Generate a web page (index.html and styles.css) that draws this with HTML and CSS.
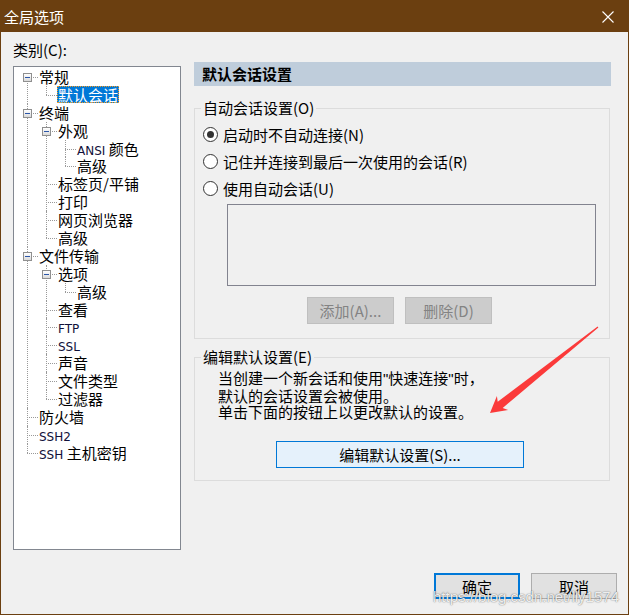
FILE: index.html
```html
<!DOCTYPE html>
<html lang="zh-CN">
<head>
  <meta charset="UTF-8">
  <title>全局选项</title>
  <link rel="stylesheet" href="styles.css">
</head>
<body>
  <div class="window">
    <div class="titlebar">
      <span class="title">全局选项</span>
      <svg class="close" width="12" height="12" viewBox="0 0 12 12">
        <path d="M0.5 0.5 L11.5 11.5 M11.5 0.5 L0.5 11.5" stroke="#fff" stroke-width="1.1" fill="none"/>
      </svg>
    </div>

    <div class="main">
      <div class="left">
        <div class="cat-label">类别(C):</div>
        <div class="tree-box">
          <ul class="tree">
            <li><div class="row"><span class="slot"><span class="toggle"></span></span><span class="label">常规</span></div>
              <ul>
                <li><div class="row"><span class="slot"></span><span class="label selected">默认会话</span></div></li>
              </ul>
            </li>
            <li><div class="row"><span class="slot"><span class="toggle"></span></span><span class="label">终端</span></div>
              <ul>
                <li><div class="row"><span class="slot"><span class="toggle"></span></span><span class="label">外观</span></div>
                  <ul>
                    <li><div class="row"><span class="slot"></span><span class="label"><span class="lat">ANSI</span> 颜色</span></div></li>
                    <li><div class="row"><span class="slot"></span><span class="label">高级</span></div></li>
                  </ul>
                </li>
                <li><div class="row"><span class="slot"></span><span class="label">标签页/平铺</span></div></li>
                <li><div class="row"><span class="slot"></span><span class="label">打印</span></div></li>
                <li><div class="row"><span class="slot"></span><span class="label">网页浏览器</span></div></li>
                <li><div class="row"><span class="slot"></span><span class="label">高级</span></div></li>
              </ul>
            </li>
            <li><div class="row"><span class="slot"><span class="toggle"></span></span><span class="label">文件传输</span></div>
              <ul>
                <li><div class="row"><span class="slot"><span class="toggle"></span></span><span class="label">选项</span></div>
                  <ul>
                    <li><div class="row"><span class="slot"></span><span class="label">高级</span></div></li>
                  </ul>
                </li>
                <li><div class="row"><span class="slot"></span><span class="label">查看</span></div></li>
                <li><div class="row"><span class="slot"></span><span class="label"><span class="lat">FTP</span></span></div></li>
                <li><div class="row"><span class="slot"></span><span class="label"><span class="lat">SSL</span></span></div></li>
                <li><div class="row"><span class="slot"></span><span class="label">声音</span></div></li>
                <li><div class="row"><span class="slot"></span><span class="label">文件类型</span></div></li>
                <li><div class="row"><span class="slot"></span><span class="label">过滤器</span></div></li>
              </ul>
            </li>
            <li><div class="row"><span class="slot"></span><span class="label">防火墙</span></div></li>
            <li><div class="row"><span class="slot"></span><span class="label"><span class="lat">SSH2</span></span></div></li>
            <li><div class="row"><span class="slot"></span><span class="label"><span class="lat">SSH</span> 主机密钥</span></div></li>
          </ul>
        </div>
      </div>

      <div class="right">
        <div class="page-header">默认会话设置</div>

        <fieldset class="group auto-group">
          <legend>自动会话设置(O)</legend>
          <label class="radio-row"><input type="radio" name="auto" checked>启动时不自动连接(N)</label>
          <label class="radio-row"><input type="radio" name="auto">记住并连接到最后一次使用的会话(R)</label>
          <label class="radio-row"><input type="radio" name="auto">使用自动会话(U)</label>
          <div class="session-list"></div>
          <div class="list-buttons">
            <button class="btn disabled">添加(A)...</button>
            <button class="btn disabled">删除(D)</button>
          </div>
        </fieldset>

        <fieldset class="group edit-group">
          <legend>编辑默认设置(E)</legend>
          <p class="desc">当创建一个新会话和使用<span class="q">"</span>快速连接<span class="q">"</span>时，<br>默认的会话设置会被使用。<br>单击下面的按钮上以更改默认的设置。</p>
          <button class="btn edit-btn">编辑默认设置(S)...</button>
        </fieldset>
      </div>
    </div>

    <div class="footer">
      <button class="btn dlg-btn default">确定</button>
      <button class="btn dlg-btn">取消</button>
    </div>

    <svg class="arrow" width="629" height="615" viewBox="0 0 629 615">
      <polygon points="490,413 508.1,410 502.7,408 598.4,327.6 597.6,326.4 497.7,401.8 496.9,396" fill="#fb3a3a"/>
    </svg>
    <div class="watermark">https://blog.csdn.net/lly1574</div>
  </div>
</body>
</html>
```

FILE: styles.css
```css
* {
  box-sizing: border-box;
}
body {
  margin: 0;
  font-family: "Noto Sans CJK SC", "Liberation Sans", sans-serif;
  font-size: 15px;
  color: #000;
  background: #f0f0f0;
}
.window {
  position: relative;
  width: 629px;
  height: 615px;
  border: 1px solid #6b3f10;
  background: #f0f0f0;
}
.titlebar {
  height: 31px;
  background: #6b3f10;
  color: #fff;
  display: flex;
  align-items: center;
  justify-content: space-between;
  padding: 0 14px 0 3px;
}
.title {
  line-height: 18px;
}

.main {
  display: grid;
  grid-template-columns: 168px 417px;
  column-gap: 13px;
  padding: 9px 0 0 12px;
}
.cat-label {
  line-height: 18px;
  margin-bottom: 7px;
}
.tree-box {
  height: 484px;
  background: #fff;
  border: 1px solid #828790;
}

/* tree */
.tree, .tree ul {
  list-style: none;
  margin: 0;
  padding: 0;
}
.tree {
  padding: 1px 0 0 2px;
}
.tree ul {
  padding-left: 19px;
}
.tree li {
  position: relative;
}
.tree li::before {
  content: "";
  position: absolute;
  left: 11px;
  top: 0;
  bottom: 0;
  border-left: 1px dotted #999;
}
.tree li:last-child::before {
  bottom: auto;
  height: 9px;
}
.tree > li:first-child::before {
  top: 9px;
}
.row {
  display: flex;
  height: 17.9px;
}
.slot {
  position: relative;
  width: 22px;
  flex: none;
}
.slot::after {
  content: "";
  position: absolute;
  left: 11px;
  top: 9px;
  width: 11px;
  border-top: 1px dotted #999;
}
.toggle {
  position: absolute;
  left: 7px;
  top: 5px;
  width: 9px;
  height: 9px;
  border: 1px solid #8f8f8f;
  background: linear-gradient(#fff, #dadada);
  z-index: 1;
}
.toggle::after {
  content: "";
  position: absolute;
  left: 1px;
  top: 3px;
  width: 5px;
  height: 1px;
  background: #2b56a8;
}
.label {
  height: 17px;
  line-height: 17px;
  padding: 0 1px;
  white-space: nowrap;
}
.label.selected {
  background: #0078d7;
  color: #fff;
  outline: 1px dotted #f59a23;
  outline-offset: -1px;
}
.lat {
  font-family: "DejaVu Sans", sans-serif;
  font-size: 12px;
  color: #10103a;
}

/* right side */
.page-header {
  margin-top: 21px;
  height: 24px;
  line-height: 24px;
  padding-left: 8px;
  background: #bfcddb;
  font-weight: bold;
}
.group {
  margin: 13px 1px 0 0;
  padding: 0;
  border: 1px solid #dcdcdc;
  min-width: 0;
}
.group legend {
  margin-left: 6px;
  padding: 0 2px;
  line-height: 18px;
}
.auto-group {
  padding: 4px 0 14px;
}
.radio-row {
  display: flex;
  align-items: center;
  height: 27px;
  padding-left: 8px;
}
.radio-row input {
  appearance: none;
  margin: 0 5px 0 0;
  width: 15px;
  height: 15px;
  border: 1px solid #333;
  border-radius: 50%;
  background: #fff;
  position: relative;
}
.radio-row input:checked::after {
  content: "";
  position: absolute;
  left: 3px;
  top: 3px;
  width: 7px;
  height: 7px;
  border-radius: 50%;
  background: #333;
}
.session-list {
  margin: 2px 0 0 32px;
  width: 369px;
  height: 82px;
  border: 1px solid #82838f;
}
.list-buttons {
  display: flex;
  gap: 11px;
  margin: 11px 0 0 112px;
}
.btn {
  font: inherit;
  color: #000;
  padding: 0;
  cursor: default;
}
.btn.disabled {
  width: 87px;
  height: 27px;
  background: #cccccc;
  border: 1px solid #bfbfbf;
  color: #838383;
}

.edit-group {
  margin-top: 9px;
  padding: 4px 0 12px;
}
.desc {
  margin: 0;
  padding-left: 23px;
  line-height: 16.5px;
}
.q {
  font-family: "Liberation Sans", sans-serif;
}
.edit-btn {
  display: block;
  margin: 20px 0 0 81px;
  width: 248px;
  height: 27px;
  background: #e5f1fb;
  border: 1px solid #0078d7;
}

.footer {
  display: flex;
  justify-content: flex-end;
  gap: 11px;
  margin-top: 23px;
  padding-right: 11px;
}
.dlg-btn {
  width: 86px;
  height: 26px;
  background: #e1e1e1;
  border: 1px solid #adadad;
}
.dlg-btn.default {
  border: 2px solid #0078d7;
}

.arrow {
  position: absolute;
  left: -1px;
  top: -1px;
  pointer-events: none;
}
.watermark {
  position: absolute;
  right: 9px;
  bottom: 9px;
  font-family: "Liberation Sans", sans-serif;
  font-size: 15px;
  color: rgba(255, 255, 255, 0.9);
  text-shadow: 0 0 1px rgba(0, 0, 0, 0.5), 0 0 2px rgba(0, 0, 0, 0.25);
}
```
